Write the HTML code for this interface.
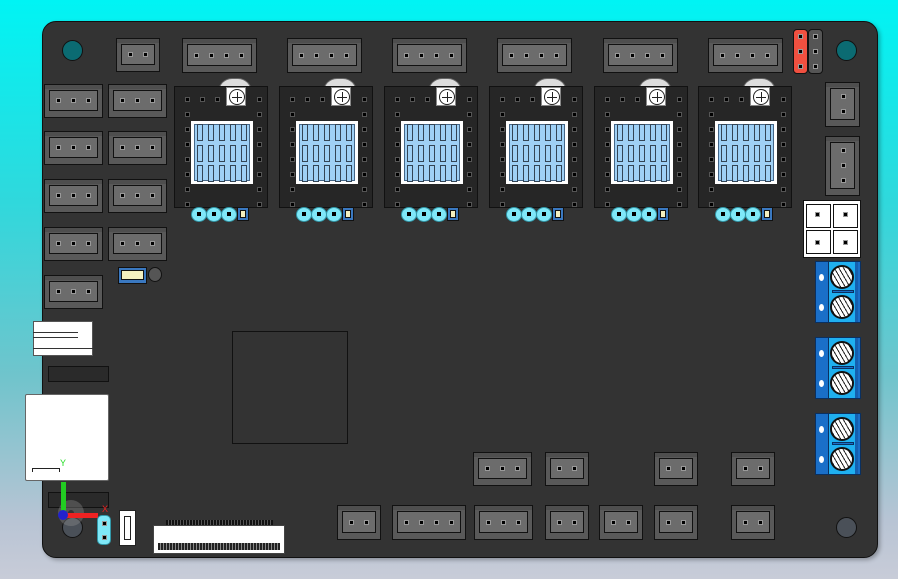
<!DOCTYPE html>
<html><head><meta charset="utf-8">
<style>
*{margin:0;padding:0;box-sizing:border-box}
html,body{width:898px;height:579px;overflow:hidden}
body{background:linear-gradient(180deg,#00f4f4 0%,#30d8dc 35%,#70c4cc 65%,#b8c4d4 90%,#c8ccd8 100%);position:relative;font-family:"Liberation Sans",sans-serif}
.a{position:absolute}
#board{left:42px;top:21px;width:836px;height:537px;background:#333;border:1px solid #111;border-radius:14px;box-shadow:2px 2px 4px rgba(0,0,0,.3)}
.con{position:absolute;background:#595959;border:1px solid #111;box-shadow:inset 0 4px 0 #4e4e4e}
.con .in{position:absolute;left:4px;right:4px;top:5px;bottom:6px;background:#6c6c6c;border:1px solid #111}
.pin{position:absolute;width:5px;height:5px;background:#000;border:1px solid #999}
.mod{position:absolute;width:94px;height:122px;background:#262626;border:1px solid #111}
.hs{position:absolute;left:16px;top:34px;width:62px;height:63px;background:#fff;padding:3px}
.hs .b{width:100%;height:100%;background:#9fd0f5;border:1px solid #468;position:relative}
.fin{position:absolute;width:6px;height:17px;border:1px solid #345;background:#9fd0f5}
.mp{position:absolute;width:5px;height:5px;background:#000;border:1px solid #555}
.pot{position:absolute;left:51px;top:0;width:20px;height:19px;background:#fff;border:1px solid #888}
.pot:after{content:"";position:absolute;left:2px;top:1px;width:14px;height:14px;border:1px solid #222;border-radius:50%;background:linear-gradient(#222,#222) center/1px 10px no-repeat,linear-gradient(#222,#222) center/10px 1px no-repeat}
.bump{position:absolute;width:34px;height:14px;border-radius:17px 17px 0 0;background:#ddd;border:1px solid #666}
.cy{position:absolute;width:16px;height:15px;border-radius:50%;background:#7fe8f8;border:1px solid #39a}
.cy:after{content:"";position:absolute;left:5px;top:4px;width:4px;height:4px;background:#000}
.tb{position:absolute;width:46px;height:62px;background:#1a6fc8;border:1px solid #0a3060}
.tb .f{position:absolute;left:12px;top:0;width:30px;height:60px;background:#1fb0f0;border-left:1px solid #0a3060;border-right:3px solid #1560b0}
.scr{position:absolute;left:14px;width:24px;height:24px;border-radius:50%;background:repeating-linear-gradient(60deg,#fff 0 3px,#222 3px 4px);border:2px solid #111}
.hole{position:absolute;width:21px;height:21px;border-radius:50%;border:1px solid #111}
</style></head><body>
<div id="board" class="a"></div>
<div class="hole" style="left:62px;top:40px;background:#0b6b72"></div>
<div class="hole" style="left:836px;top:40px;background:#0b6b72"></div>
<div class="hole" style="left:62px;top:517px;background:#4a5058"></div>
<div class="hole" style="left:836px;top:517px;background:#4a5058"></div>
<div id="g"></div>
<div class="a" style="left:232px;top:331px;width:116px;height:113px;border:1px solid #111;background:#333"></div>
<div class="a" style="left:793px;top:29px;width:15px;height:45px;background:#f05040;border:1px solid #111;border-radius:4px"></div>
<div class="a" style="left:808px;top:29px;width:15px;height:45px;background:#555;border:1px solid #111;border-radius:4px"></div>
<div class="pin" style="left:798px;top:34px"></div><div class="pin" style="left:798px;top:49px"></div><div class="pin" style="left:798px;top:64px"></div>
<div class="pin" style="left:813px;top:34px"></div><div class="pin" style="left:813px;top:49px"></div><div class="pin" style="left:813px;top:64px"></div>
<div class="a" style="left:803px;top:200px;width:58px;height:58px;background:#fff;border:1px solid #111"></div>
<div class="a" style="left:806px;top:204px;width:25px;height:24px;border:1px solid #111"></div>
<div class="a" style="left:833px;top:204px;width:25px;height:24px;border:1px solid #111"></div>
<div class="a" style="left:806px;top:230px;width:25px;height:24px;border:1px solid #111"></div>
<div class="a" style="left:833px;top:230px;width:25px;height:24px;border:1px solid #111"></div>
<div class="pin" style="left:815px;top:212px"></div><div class="pin" style="left:843px;top:212px"></div>
<div class="pin" style="left:815px;top:240px"></div><div class="pin" style="left:843px;top:240px"></div>
<div class="a" style="left:118px;top:267px;width:29px;height:17px;background:#3a78c0;border:1px solid #111"></div>
<div class="a" style="left:121px;top:270px;width:23px;height:10px;background:#f4f0c0;border:1px solid #111"></div>
<div class="a" style="left:148px;top:267px;width:14px;height:15px;background:#555;border:1px solid #111;border-radius:50%"></div>
<div class="a" style="left:33px;top:321px;width:60px;height:35px;background:#fff;border:1px solid #555"></div>
<div class="a" style="left:33px;top:332px;width:45px;height:1px;background:#333"></div>
<div class="a" style="left:33px;top:337px;width:45px;height:1px;background:#333"></div>
<div class="a" style="left:33px;top:348px;width:60px;height:1px;background:#333"></div>
<div class="a" style="left:48px;top:366px;width:61px;height:16px;background:#2a2a2a;border:1px solid #111"></div>
<div class="a" style="left:48px;top:492px;width:61px;height:16px;background:#2a2a2a;border:1px solid #111"></div>
<div class="a" style="left:25px;top:394px;width:84px;height:87px;background:#fff;border:1px solid #666;border-radius:2px"></div>
<div class="a" style="left:32px;top:468px;width:28px;height:4px;border:1px solid #222;border-bottom:none"></div>
<div class="a" style="left:58px;top:500px;width:26px;height:26px;border:10px solid rgba(150,150,150,.35);border-radius:50%"></div>
<div class="a" style="left:61px;top:482px;width:5px;height:30px;background:#2c2"></div>
<div class="a" style="left:66px;top:513px;width:32px;height:5px;background:#e22"></div>
<div class="a" style="left:58px;top:510px;width:10px;height:10px;background:#22c;border-radius:50%"></div>
<div class="a" style="left:60px;top:458px;color:#2d2;font-size:9px">Y</div>
<div class="a" style="left:102px;top:504px;color:#e22;font-size:9px">X</div>
<div class="a" style="left:97px;top:515px;width:14px;height:30px;background:#7fe8f8;border:1px solid #39a;border-radius:5px"></div>
<div class="pin" style="left:102px;top:521px"></div><div class="pin" style="left:102px;top:535px"></div>
<div class="a" style="left:119px;top:510px;width:17px;height:36px;background:#fff;border:1px solid #222"></div>
<div class="a" style="left:124px;top:516px;width:7px;height:24px;border:1px solid #222"></div>
<div class="a" style="left:166px;top:520px;width:107px;height:5px;background:repeating-linear-gradient(90deg,#111 0 2px,#555 2px 3px)"></div>
<div class="a" style="left:153px;top:525px;width:132px;height:29px;background:#fff;border:1px solid #444"></div>
<div class="a" style="left:158px;top:543px;width:122px;height:7px;background:repeating-linear-gradient(90deg,#222 0 2px,#888 2px 3px)"></div>
<script>
var g=document.getElementById('g'),h='';
function con(x,y,w,hh,n,vert){
 h+='<div class="con" style="left:'+x+'px;top:'+y+'px;width:'+w+'px;height:'+hh+'px"><div class="in"></div></div>';
 for(var i=0;i<n;i++){
  if(!vert){var px=x+w/2+(i-(n-1)/2)*15-3;h+='<div class="pin" style="left:'+px+'px;top:'+(y+hh/2-3)+'px"></div>';}
  else{var py=y+hh/2+(i-(n-1)/2)*15-3;h+='<div class="pin" style="left:'+(x+w/2-2)+'px;top:'+py+'px"></div>';}
 }
}
con(116,38,44,34,2);
[182,287,392,497,603,708].forEach(function(x){con(x,38,75,35,4)});
[84,131,179,227].forEach(function(y){con(44,y,59,34,3);con(108,y,59,34,3)});
con(44,275,59,34,3);
con(825,82,35,45,2,1);con(825,136,35,60,3,1);
[[473,59,3],[545,44,2],[654,44,2],[731,44,2]].forEach(function(c){con(c[0],452,c[1],34,c[2])});
[[337,44,2],[392,74,4],[474,59,3],[545,44,2],[599,44,2],[654,44,2],[731,44,2]].forEach(function(c){con(c[0],505,c[1],35,c[2])});
[174,279,384,489,594,698].forEach(function(x){
 h+='<div class="bump" style="left:'+(x+44)+'px;top:78px"></div>';
 var s='<div class="mod" style="left:'+x+'px;top:86px">';
 s+='<div class="pot"></div>';
 for(var i=0;i<8;i++){s+='<div class="mp" style="left:10px;top:'+(10+i*15)+'px"></div><div class="mp" style="left:82px;top:'+(10+i*15)+'px"></div>';}
 s+='<div class="mp" style="left:25px;top:10px"></div><div class="mp" style="left:40px;top:10px"></div>';
 s+='<div class="hs"><div class="b">';
 for(var r=0;r<3;r++)for(var c=0;c<5;c++)s+='<div class="fin" style="left:'+(2+c*11)+'px;top:'+(r*19+(r==0?-1:r==2?2:1))+'px"></div>';
 s+='</div></div></div>';h+=s;
 for(var k=0;k<3;k++)h+='<div class="cy" style="left:'+(x+17+k*15)+'px;top:207px"></div>';
 h+='<div class="a" style="left:'+(x+63)+'px;top:207px;width:12px;height:14px;background:#3a78c0;border:1px solid #111"><div style="margin:2px;width:6px;height:8px;background:#f4f0c0;border:1px solid #111"></div></div>';
});
[261,337,413].forEach(function(y){
 h+='<div class="tb" style="left:815px;top:'+y+'px"><div class="f"><div class="scr" style="left:1px;top:3px"></div><div class="a" style="left:3px;top:28px;width:22px;height:3px;background:#1a6fc8;border:1px solid #0a3060"></div><div class="scr" style="left:1px;top:33px"></div></div>';
 h+='<div class="a" style="left:3px;top:12px;width:5px;height:7px;background:#fff;border-radius:50%"></div><div class="a" style="left:3px;top:42px;width:5px;height:7px;background:#fff;border-radius:50%"></div></div>';
});
g.innerHTML=h;
</script>
</body></html>
